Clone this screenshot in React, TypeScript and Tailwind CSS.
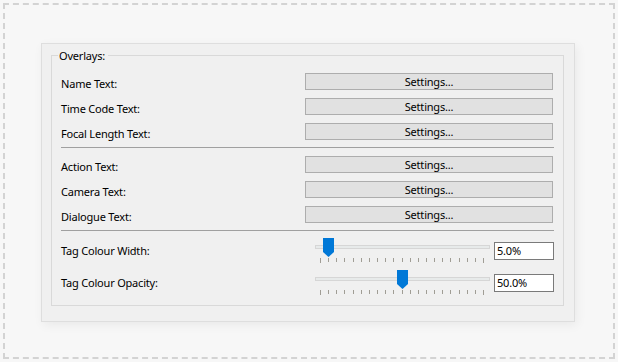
import React from "react";

const buttonRows1 = ["Name Text:", "Time Code Text:", "Focal Length Text:"];
const buttonRows2 = ["Action Text:", "Camera Text:", "Dialogue Text:"];

function ButtonRow({ label }: { label: string }) {
  return (
    <div className="flex h-[17px] items-start">
      <span className="mt-[3px] flex-1 whitespace-nowrap leading-[16px]">{label}</span>
      <button className="mr-[1px] h-[17px] w-[248px] border border-[#adadad] bg-[#e1e1e1] text-center leading-[15px] tracking-[-0.2px] text-black">
        Settings...
      </button>
    </div>
  );
}

function Ticks() {
  const xs = Array.from({ length: 21 }, (_, i) => 5.5 + Math.round(i * 8.15));
  return (
    <svg width="175" height="6" className="absolute left-0 top-[20px]">
      {xs.map((x, i) => (
        <line
          key={i}
          x1={x}
          x2={x}
          y1={0}
          y2={i === 0 || i === 20 ? 5 : 4}
          stroke="#a09d95"
          strokeWidth="1"
        />
      ))}
    </svg>
  );
}

function SliderRow({ label, index, value }: { label: string; index: number; value: string }) {
  const left = Math.round(index * 8.15);
  return (
    <div className="flex h-[26px] items-start">
      <span className="mt-[5px] flex-1 whitespace-nowrap leading-[16px]">{label}</span>
      <div className="relative h-[26px] w-[175px]">
        <div className="absolute left-0 top-[7px] h-[4px] w-[175px] border border-[#d6d6d6] bg-[#e7eaea]" />
        <Ticks />
        <svg width="11" height="19" className="absolute top-0" style={{ left }}>
          <path d="M0 0 H11 V14 L5.5 19 L0 14 Z" fill="#0078d7" />
        </svg>
      </div>
      <div className="ml-[4px] mt-[4px] h-[18px] w-[60px] border border-[#7a7a7a] bg-white pl-[2px] leading-[16px]">
        {value}
      </div>
    </div>
  );
}

export default function App() {
  return (
    <div className="h-[362px] w-[618px] bg-[#f7f7f7] p-[3px] font-['Noto_Sans',sans-serif] text-[11px] tracking-[-0.2px] text-black">
      <div className="h-full border-2 border-dashed border-[#d3d3d3] pl-[36px] pt-[38px]">
        <div className="box-border h-[279px] w-[534px] border border-[#dedede] bg-[#f0f0f0] pb-[15px] pl-[9px] pr-[10px] pt-[11px] shadow-[2px_3px_10px_rgba(0,0,0,0.06)]">
          <div className="relative h-full border border-[#d9d9d9] px-[9px] pt-[17px]">
            <span className="absolute left-[6px] top-[-8px] bg-[#f0f0f0] pl-[1px] pr-[3px] leading-[16px]">
              Overlays:
            </span>
            <div className="flex flex-col gap-[8px]">
              {buttonRows1.map((l) => (
                <ButtonRow key={l} label={l} />
              ))}
            </div>
            <div className="mb-[8px] mt-[7px] h-px bg-[#a0a0a0]" />
            <div className="flex flex-col gap-[8px]">
              {buttonRows2.map((l) => (
                <ButtonRow key={l} label={l} />
              ))}
            </div>
            <div className="mb-[7px] mt-[7px] h-px bg-[#a0a0a0]" />
            <div className="flex flex-col gap-[6px]">
              <SliderRow label="Tag Colour Width:" index={1} value="5.0%" />
              <SliderRow label="Tag Colour Opacity:" index={10} value="50.0%" />
            </div>
          </div>
        </div>
      </div>
    </div>
  );
}
